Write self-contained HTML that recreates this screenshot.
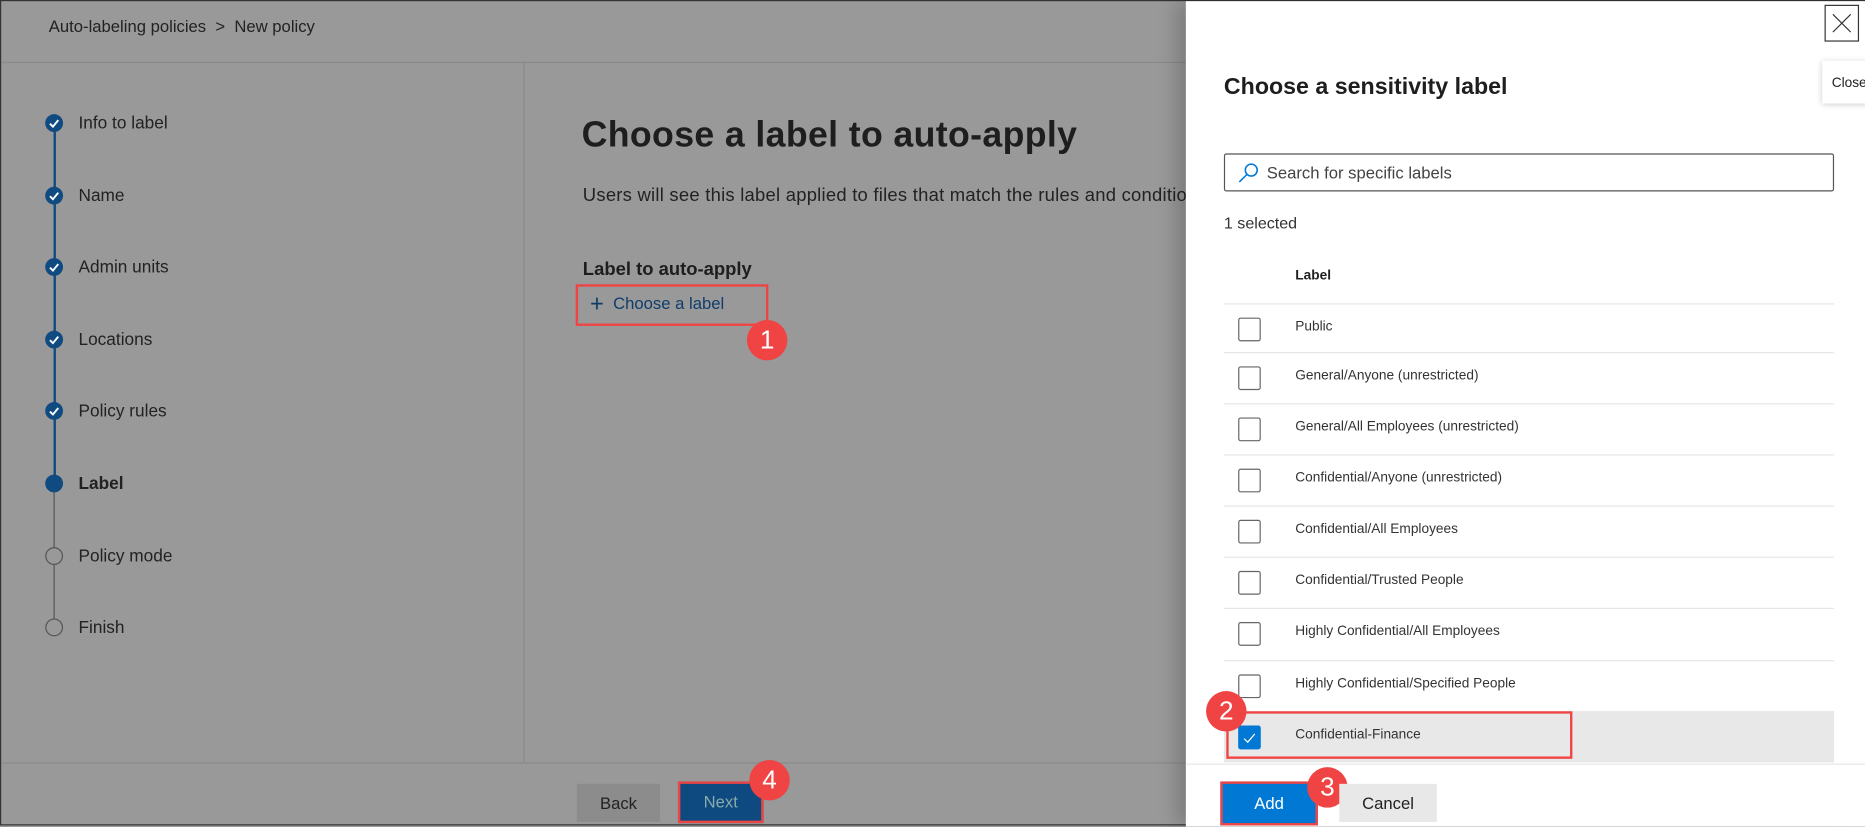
<!DOCTYPE html>
<html><head><meta charset="utf-8"><style>
*{margin:0;padding:0;box-sizing:border-box}
html,body{width:1865px;height:825px;overflow:hidden;background:#999}
#s{position:absolute;left:0;top:0;width:1568px;height:694px;transform:scale(1.18941);transform-origin:0 0;background:#999;font-family:"Liberation Sans",sans-serif;color:#1f1f1f;border:1px solid #333}
.a{position:absolute}
.step{position:absolute;left:65px;font-size:14.5px;color:#222}
.dot{position:absolute;left:37px;width:15px;height:15px;border-radius:50%;background:#0f4a80}
.dot svg{position:absolute;left:2px;top:2px}
.ring{position:absolute;left:37px;width:15px;height:15px;border-radius:50%;border:1.5px solid #555}
.badge{position:absolute;width:34px;height:34px;border-radius:50%;background:#f04444;color:#fff;font-size:22px;text-align:center;line-height:34px}
.row{position:absolute;left:1028px;width:513px;height:43px;border-top:1px solid #e6e6e6}
.row .cb{position:absolute;left:12px;top:11px;width:19px;height:20px;border:1px solid #666;border-radius:2px;background:#fff}
.row span{position:absolute;left:60px;top:13px;font-size:11.5px;color:#333}
</style></head><body><div id="s">
<div class="a" style="left:40px;top:13px;font-size:14px;color:#222">Auto-labeling policies &nbsp;&gt;&nbsp; New policy</div>
<div class="a" style="left:0;top:51px;width:996px;height:1px;background:#8a8a8a"></div>
<div class="a" style="left:439px;top:52px;width:1px;height:588px;background:#8a8a8a"></div>
<div class="a" style="left:0;top:640px;width:996px;height:1px;background:#8a8a8a"></div>
<div class="a" style="left:44px;top:109px;width:2px;height:290px;background:#0f4a80"></div>
<div class="a" style="left:44px;top:412px;width:1px;height:108px;background:#555"></div>
<div class="dot" style="top:95px"><svg width="11" height="11"><path d="M2 6l2.5 2.5L9 3" stroke="#fff" stroke-width="1.6" fill="none"/></svg></div>
<div class="dot" style="top:156px"><svg width="11" height="11"><path d="M2 6l2.5 2.5L9 3" stroke="#fff" stroke-width="1.6" fill="none"/></svg></div>
<div class="dot" style="top:216px"><svg width="11" height="11"><path d="M2 6l2.5 2.5L9 3" stroke="#fff" stroke-width="1.6" fill="none"/></svg></div>
<div class="dot" style="top:277px"><svg width="11" height="11"><path d="M2 6l2.5 2.5L9 3" stroke="#fff" stroke-width="1.6" fill="none"/></svg></div>
<div class="dot" style="top:337px"><svg width="11" height="11"><path d="M2 6l2.5 2.5L9 3" stroke="#fff" stroke-width="1.6" fill="none"/></svg></div>
<div class="dot" style="top:398px"></div>
<div class="ring" style="top:459px;background:#999"></div>
<div class="ring" style="top:519px;background:#999"></div>
<div class="step" style="top:95px">Info to label</div>
<div class="step" style="top:156px">Name</div>
<div class="step" style="top:216px">Admin units</div>
<div class="step" style="top:277px">Locations</div>
<div class="step" style="top:337px">Policy rules</div>
<div class="step" style="top:398px;font-weight:bold">Label</div>
<div class="step" style="top:459px">Policy mode</div>
<div class="step" style="top:519px">Finish</div>
<div class="a" style="left:488px;top:96px;font-size:30px;font-weight:bold;color:#1e1e1e;white-space:nowrap;letter-spacing:0.3px">Choose a label to auto-apply</div>
<div class="a" style="left:489px;top:155px;font-size:15.5px;color:#222;white-space:nowrap;letter-spacing:0.2px">Users will see this label applied to files that match the rules and conditio</div>
<div class="a" style="left:489px;top:217px;font-size:15.5px;font-weight:bold;color:#1e1e1e">Label to auto-apply</div>
<div class="a" style="left:483px;top:238px;width:162px;height:35px;border:2px solid #f04444"></div>
<div class="a" style="left:495px;top:242px;font-size:14px;color:#0f3d6b"><span style="font-size:20px;font-weight:300;position:relative;top:2px">+</span>&nbsp; Choose a label</div>
<div class="badge" style="left:627px;top:268px">1</div>
<div class="a" style="left:484px;top:658px;width:70px;height:32px;background:#8c8c8c;font-size:14px;text-align:center;line-height:32px;color:#222">Back</div>
<div class="a" style="left:569px;top:656px;width:72px;height:35px;border:2px solid #f04444;background:#0e4a80;font-size:14px;text-align:center;line-height:31px;color:#8aa">Next</div>
<div class="badge" style="left:629px;top:638px">4</div>
<div class="a" style="left:996px;top:0;width:572px;height:694px;background:#fff;box-shadow:-8px 0 16px rgba(0,0,0,.2)"></div>
<div class="a" style="left:1533px;top:3px;width:29px;height:31px;border:1px solid #333"></div>
<svg class="a" style="left:1539px;top:10px" width="17" height="17"><path d="M1 1L16 16M16 1L1 16" stroke="#333" stroke-width="1"/></svg>
<div class="a" style="left:1531px;top:50px;width:40px;height:36px;background:#fff;box-shadow:0 1px 5px rgba(0,0,0,.2);font-size:11.5px;padding:13px 0 0 8px">Close</div>
<div class="a" style="left:1028px;top:61px;font-size:19.5px;font-weight:bold;color:#1e1e1e">Choose a sensitivity label</div>
<div class="a" style="left:1028px;top:128px;width:513px;height:32px;border:1px solid #555;border-radius:2px"></div>
<svg class="a" style="left:1040px;top:135px" width="18" height="18"><circle cx="11" cy="7" r="5" stroke="#0078d4" stroke-width="1.3" fill="none"/><path d="M7.5 10.5L1 17" stroke="#0078d4" stroke-width="1.3"/></svg>
<div class="a" style="left:1064px;top:136px;font-size:14px;color:#444">Search for specific labels</div>
<div class="a" style="left:1028px;top:179px;font-size:13.5px;color:#333">1 selected</div>
<div class="a" style="left:1088px;top:225px;font-size:11.5px;font-weight:bold;color:#222">Label</div>
<div class="row" style="top:254px"><div class="cb"></div><span>Public</span></div>
<div class="row" style="top:295px"><div class="cb"></div><span>General/Anyone (unrestricted)</span></div>
<div class="row" style="top:338px"><div class="cb"></div><span>General/All Employees (unrestricted)</span></div>
<div class="row" style="top:381px"><div class="cb"></div><span>Confidential/Anyone (unrestricted)</span></div>
<div class="row" style="top:424px"><div class="cb"></div><span>Confidential/All Employees</span></div>
<div class="row" style="top:467px"><div class="cb"></div><span>Confidential/Trusted People</span></div>
<div class="row" style="top:510px"><div class="cb"></div><span>Highly Confidential/All Employees</span></div>
<div class="row" style="top:554px"><div class="cb"></div><span>Highly Confidential/Specified People</span></div>
<div class="row" style="top:597px;background:#e8e8e8"><div class="cb" style="background:#0078d4;border-color:#0078d4"><svg width="17" height="18"><path d="M4 10l3 3 6-7" stroke="#fff" stroke-width="1" fill="none"/></svg></div><span>Confidential-Finance</span></div>
<div class="a" style="left:1030px;top:597px;width:291px;height:40px;border:2px solid #f04444"></div>
<div class="badge" style="left:1013px;top:580px">2</div>
<div class="a" style="left:996px;top:641px;width:572px;height:1px;background:#e6e6e6"></div>
<div class="a" style="left:1025px;top:656px;width:82px;height:37px;border:2px solid #f04444;background:#0078d4;font-size:14px;text-align:center;line-height:33px;color:#fff">Add</div>
<div class="badge" style="left:1098px;top:644px">3</div>
<div class="a" style="left:1125px;top:658px;width:82px;height:32px;background:#e8e8e8;font-size:14px;text-align:center;line-height:32px;color:#222">Cancel</div>
</div></body></html>
